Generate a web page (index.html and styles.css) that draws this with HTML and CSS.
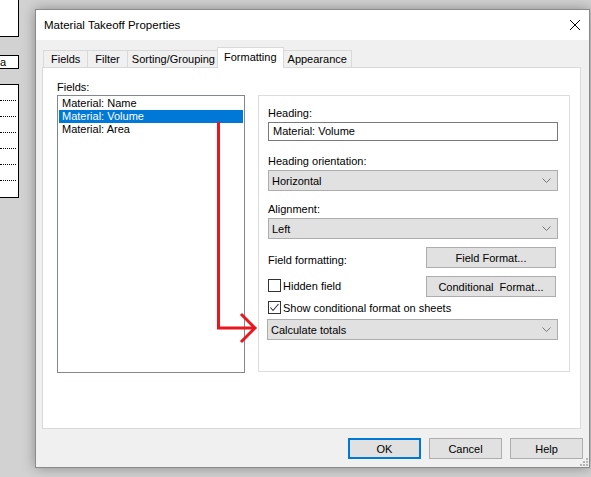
FILE: index.html
```html
<!DOCTYPE html>
<html lang="en">
<head>
    <meta charset="UTF-8">
    <meta name="viewport" content="width=device-width, initial-scale=1.0">
    <title>Material Takeoff Properties</title>
    <link rel="stylesheet" href="styles.css">
</head>
<body>
    <!-- schedule view behind the dialog -->
    <div class="sheet">
        <div class="sheet-head"></div>
        <div class="sheet-title">a</div>
        <div class="sheet-rows">
            <div class="sheet-row"></div>
            <div class="sheet-row"></div>
            <div class="sheet-row"></div>
            <div class="sheet-row"></div>
            <div class="sheet-row"></div>
            <div class="sheet-row"></div>
            <div class="sheet-row last"></div>
        </div>
    </div>

    <div class="dialog">
        <div class="titlebar">
            <span class="title">Material Takeoff Properties</span>
            <svg class="close" width="10" height="10" viewBox="0 0 10 10">
                <path d="M0 0 L10 10 M10 0 L0 10" stroke="#000" stroke-width="1" fill="none"/>
            </svg>
        </div>

        <div class="dialog-body">
            <div class="tabs">
                <div class="tab">Fields</div>
                <div class="tab">Filter</div>
                <div class="tab tab-tight">Sorting/Grouping</div>
                <div class="tab active">Formatting</div>
                <div class="tab tab-tight">Appearance</div>
            </div>

            <div class="tab-panel">
                <div class="fields-col">
                    <div class="label">Fields:</div>
                    <ul class="listbox">
                        <li>Material: Name</li>
                        <li class="selected">Material: Volume</li>
                        <li>Material: Area</li>
                    </ul>
                </div>

                <div class="group">
                    <div class="label">Heading:</div>
                    <div class="textbox">Material: Volume</div>

                    <div class="label">Heading orientation:</div>
                    <div class="combo">
                        <span>Horizontal</span>
                        <svg class="chevron" width="9" height="5" viewBox="0 0 9 5"><polyline points="0.5,0.5 4.5,4.5 8.5,0.5" fill="none" stroke="#777"/></svg>
                    </div>

                    <div class="label">Alignment:</div>
                    <div class="combo">
                        <span>Left</span>
                        <svg class="chevron" width="9" height="5" viewBox="0 0 9 5"><polyline points="0.5,0.5 4.5,4.5 8.5,0.5" fill="none" stroke="#777"/></svg>
                    </div>

                    <div class="option-row first">
                        <span class="row-label">Field formatting:</span>
                        <button class="btn btn-side">Field Format...</button>
                    </div>
                    <div class="option-row">
                        <span class="check"><span class="box"></span>Hidden field</span>
                        <button class="btn btn-side">Conditional&nbsp; Format...</button>
                    </div>
                    <div class="check check-row">
                        <span class="box">
                            <svg width="11" height="11" viewBox="0 0 11 11"><polyline points="1.5,5.5 4,8.5 9.5,2" fill="none" stroke="#333" stroke-width="1.1"/></svg>
                        </span>Show conditional format on sheets
                    </div>
                    <div class="combo combo-wide">
                        <span>Calculate totals</span>
                        <svg class="chevron" width="9" height="5" viewBox="0 0 9 5"><polyline points="0.5,0.5 4.5,4.5 8.5,0.5" fill="none" stroke="#777"/></svg>
                    </div>
                </div>
            </div>

            <div class="buttons">
                <button class="btn btn-default">OK</button>
                <button class="btn">Cancel</button>
                <button class="btn">Help</button>
            </div>
        </div>

        <svg class="grip" width="8" height="8" viewBox="0 0 8 8">
            <rect x="6" y="0" width="2" height="2" fill="#b4b4b4"/>
            <rect x="3" y="3" width="2" height="2" fill="#b4b4b4"/>
            <rect x="6" y="3" width="2" height="2" fill="#b4b4b4"/>
            <rect x="0" y="6" width="2" height="2" fill="#b4b4b4"/>
            <rect x="3" y="6" width="2" height="2" fill="#b4b4b4"/>
            <rect x="6" y="6" width="2" height="2" fill="#b4b4b4"/>
        </svg>
    </div>

    <!-- red callout drawn over the dialog -->
    <svg class="callout" width="591" height="477" viewBox="0 0 591 477">
        <path d="M218.5 122 V328 H255" fill="none" stroke="#e8161e" stroke-width="3"/>
        <path d="M241 314 L255 328 L241 342" fill="none" stroke="#e8161e" stroke-width="3"/>
    </svg>
</body>
</html>
```

FILE: styles.css
```css
/* Fond général */
body {
    margin: 0;
    width: 591px;
    height: 477px;
    background: #d2d2d2;
    font-family: 'Liberation Sans', Arial, sans-serif;
    font-size: 11px;
    color: #000;
    position: relative;
    overflow: hidden;
}

/* Morceau de tableau derrière la boîte de dialogue */
.sheet {
    width: 19px;
}

.sheet-head {
    height: 36px;
    background: #fff;
    border-right: 1px solid #000;
    border-bottom: 1px solid #000;
}

.sheet-title {
    margin-top: 18px;
    height: 12px;
    line-height: 12px;
    background: #fff;
    border: 1px solid #000;
    border-left: none;
    font-size: 11px;
}

.sheet-rows {
    margin-top: 15px;
    background: #fff;
    border: 1px solid #000;
    border-left: none;
    padding-right: 2px;
}

.sheet-row {
    height: 15px;
    border-bottom: 1px dotted #000;
}

.sheet-row.last {
    height: 16px;
    border-bottom: none;
}

/* Fenêtre */
.dialog {
    position: absolute;
    left: 35px;
    top: 9px;
    width: 553px;
    height: 457px;
    border: 1px solid #8a8a8a;
    background: #f0f0f0;
    box-shadow: 0 0 12px rgba(0, 0, 0, 0.35);
    display: flex;
    flex-direction: column;
}

.titlebar {
    height: 30px;
    background: #fff;
    display: flex;
    align-items: center;
    padding-left: 8px;
}

.title {
    font-size: 11.5px;
}

.close {
    margin-left: auto;
    margin-right: 9px;
}

.dialog-body {
    padding: 7px 8px 0 6px;
}

/* Onglets */
.tabs {
    display: flex;
    align-items: flex-end;
    height: 20px;
    padding-left: 1px;
}

.tab {
    height: 16px;
    line-height: 17px;
    padding: 0 7px;
    background: #f0f0f0;
    border: 1px solid #d9d9d9;
    border-bottom: none;
    margin-right: -1px;
    white-space: nowrap;
}

.tab-tight {
    padding: 0 4px;
}

.tab.active {
    position: relative;
    z-index: 1;
    height: 20px;
    line-height: 18px;
    margin: 0 -1px -1px -2px;
    padding: 0 6px;
    background: #fff;
}

.tab.active + .tab {
    margin-left: 0;
}

.tab-panel {
    height: 360px;
    background: #fff;
    border: 1px solid #d9d9d9;
    display: flex;
    align-items: flex-start;
    padding-left: 14px;
}

.label {
    height: 14px;
    line-height: 14px;
}

/* Liste des champs */
.fields-col {
    width: 188px;
    margin-top: 12px;
}

.fields-col .label {
    margin-bottom: 1px;
}

.listbox {
    list-style: none;
    margin: 0;
    height: 274px;
    padding: 1px;
    border: 1px solid #828790;
}

.listbox li {
    height: 13px;
    line-height: 13px;
    padding-left: 3px;
}

.listbox li.selected {
    background: #0078d7;
    color: #fff;
}

/* Cadre de formatage */
.group {
    width: 290px;
    height: 266px;
    margin: 27px 0 0 13px;
    padding: 9px 11px 0 9px;
    border: 1px solid #dcdcdc;
}

.group .label {
    margin-top: 1px;
}

.textbox {
    height: 17px;
    line-height: 17px;
    margin: 2px 0 13px;
    padding-left: 4px;
    border: 1px solid #7a7a7a;
}

.combo {
    height: 19px;
    margin: 2px 0 11px;
    padding: 0 6px 0 3px;
    border: 1px solid #adadad;
    background: #e1e1e1;
    display: flex;
    align-items: center;
    justify-content: space-between;
}

.combo-wide {
    margin: 5px 0 0 -1px;
    height: 19px;
}

.option-row {
    display: flex;
    justify-content: space-between;
    align-items: center;
    margin-top: 8px;
}

.option-row.first {
    margin-top: -3px;
}

.row-label {
    padding-top: 4px;
}

.check {
    display: flex;
    align-items: center;
}

.option-row .check {
    margin-top: -2px;
}

.box {
    width: 11px;
    height: 11px;
    border: 1px solid #333;
    background: #fff;
    margin-right: 2px;
    display: flex;
}

.check-row {
    margin-top: 4px;
}

/* Boutons */
.btn {
    font-family: 'Liberation Sans', Arial, sans-serif;
    font-size: 11px;
    color: #000;
    background: #e1e1e1;
    border: 1px solid #adadad;
    width: 73px;
    height: 21px;
    padding: 0;
}

.btn-side {
    width: 130px;
    margin-right: 2px;
}

.btn-default {
    border: 2px solid #0078d7;
}

.buttons {
    display: flex;
    justify-content: flex-end;
    gap: 8px;
    margin: 9px -2px 0 0;
}

.grip {
    position: absolute;
    right: 1px;
    bottom: 1px;
}

.callout {
    position: absolute;
    left: 0;
    top: 0;
    pointer-events: none;
}
```
